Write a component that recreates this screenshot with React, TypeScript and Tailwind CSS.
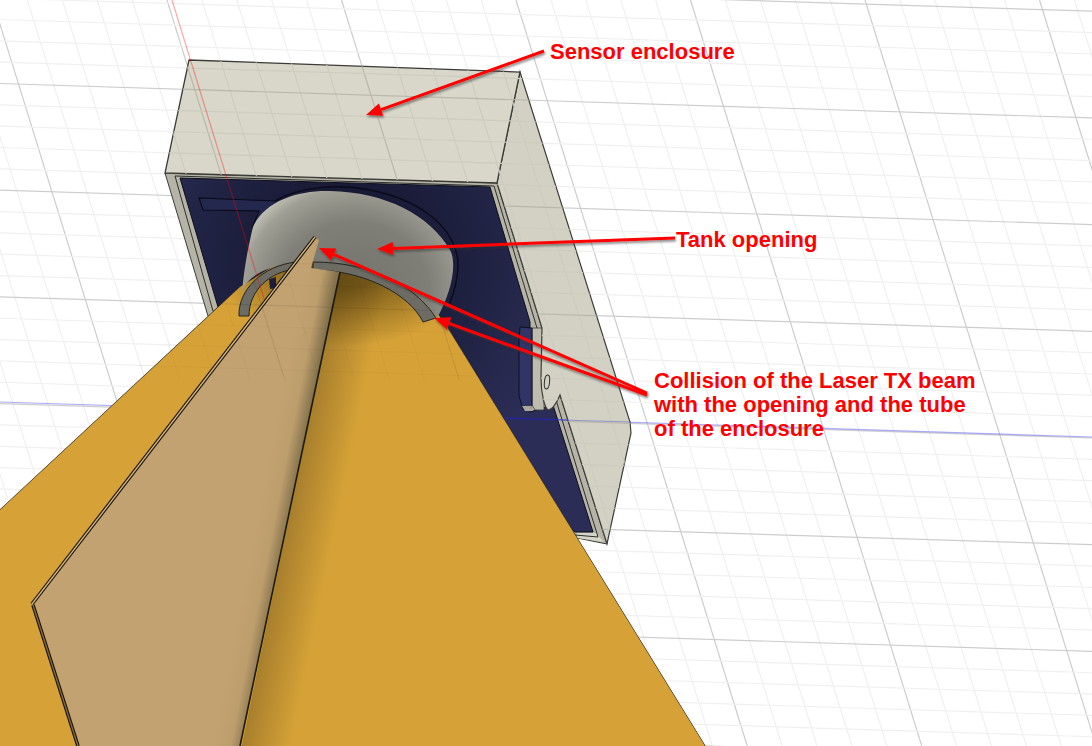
import React from 'react';

const verticals = Array.from({ length: 61 }, (_, i) => ({ x0: 865 + 34.9 * (i - 45), major: (i - 45) % 5 === 0 }));
const horizontals = Array.from({ length: 45 }, (_, i) => ({ y0: 83.5 + 21.34 * (i - 10), major: (i - 10) % 5 === 0 }));

function Grid({ major, minor, width = 1.2 }: { major: string; minor: string; width?: number }) {
  return (
    <g strokeWidth={width}>
      {verticals.map((l, i) => (
        <line key={'v' + i} x1={l.x0} y1={0} x2={l.x0 + 0.31 * 746} y2={746} stroke={l.major ? major : minor} />
      ))}
      {horizontals.map((l, i) => (
        <line key={'h' + i} x1={0} y1={l.y0} x2={1092} y2={l.y0 + 0.0315 * 1092} stroke={l.major ? major : minor} />
      ))}
    </g>
  );
}

// red callout arrow, head length/width in px
function Arrow({ from, to }: { from: [number, number]; to: [number, number] }) {
  const dx = to[0] - from[0];
  const dy = to[1] - from[1];
  const len = Math.hypot(dx, dy);
  const ux = dx / len;
  const uy = dy / len;
  const bx = to[0] - ux * 16;
  const by = to[1] - uy * 16;
  const head = `${to[0]},${to[1]} ${bx - uy * 6.5},${by + ux * 6.5} ${bx + uy * 6.5},${by - ux * 6.5}`;
  return (
    <g filter="url(#arrowShadow)">
      <line x1={from[0]} y1={from[1]} x2={bx} y2={by} stroke="#ff0000" strokeWidth={3} />
      <polygon points={head} fill="#ff0000" />
    </g>
  );
}

const topFace = '189,60 520,72 497,183 165,173';
const sideFace =
  'M520,72 L630,422 L631,433 L607,544 L560,395 C557,402 553,410 548,410 C545,408 541,395 541,378 L542,328 L497,183 Z';
const cylinder =
  'M242,292 C245,260 250,240 253,227 C265,200 300,190 330,191 C385,192 430,215 450,250 C458,265 450,295 437,318 C415,285 370,262 313,262 L295,263 C262,266 245,280 242,292 Z';
const orange = 'M0,510 L240,287 L300,250 L425,296 L447,327 L705,746 L0,746 Z';
const tan = 'M33,605 L316,238 L319,240 L311,268 L340,272 L240,746 L78,746 Z';

export default function App() {
  return (
    <div className="relative w-[1092px] h-[746px] overflow-hidden bg-white">
      <svg className="block w-[1092px] h-[746px]" viewBox="0 0 1092 746">
        <defs>
          <filter id="arrowShadow" x="-20%" y="-40%" width="140%" height="180%">
            <feDropShadow dx="1" dy="2" stdDeviation="1" floodColor="#333333" floodOpacity="0.55" />
          </filter>
          <radialGradient id="navyShade" gradientUnits="userSpaceOnUse" cx="345" cy="260" r="230">
            <stop offset="0.3" stopColor="#181a35" />
            <stop offset="1" stopColor="#2b2d56" />
          </radialGradient>
          <radialGradient
            id="cylShade"
            gradientUnits="userSpaceOnUse"
            cx="0"
            cy="0"
            r="1"
            gradientTransform="translate(355 290) scale(124 113)"
          >
            <stop offset="0" stopColor="#73726b" />
            <stop offset="0.6" stopColor="#7f7e77" />
            <stop offset="0.9" stopColor="#a09f95" />
            <stop offset="1" stopColor="#bdbcb0" />
          </radialGradient>
          <linearGradient id="tanShade" gradientUnits="userSpaceOnUse" x1="262" y1="494" x2="293" y2="500">
            <stop offset="0" stopColor="#c2a270" />
            <stop offset="0.55" stopColor="#bc9d6c" />
            <stop offset="1" stopColor="#84724c" />
          </linearGradient>
          <linearGradient id="orangeShade" gradientUnits="userSpaceOnUse" x1="253" y1="492" x2="340" y2="510">
            <stop offset="0.45" stopColor="#d6a237" />
            <stop offset="0.46" stopColor="#a87f2d" />
            <stop offset="1" stopColor="#d6a237" />
          </linearGradient>
          <radialGradient
            id="orangeDark"
            gradientUnits="userSpaceOnUse"
            cx="0"
            cy="0"
            r="1"
            gradientTransform="translate(345 262) scale(130 85)"
          >
            <stop offset="0.3" stopColor="#3a2a05" stopOpacity="0.6" />
            <stop offset="1" stopColor="#3a2a05" stopOpacity="0" />
          </radialGradient>
          <clipPath id="boxClip">
            <polygon points={topFace} />
            <path d={sideFace} />
          </clipPath>
          <clipPath id="sheetClip">
            <polygon points="120,380 240,287 300,250 425,296 447,327 480,380" />
          </clipPath>
        </defs>

        <Grid major="#cdcdcd" minor="#f0f0f0" />
        <line x1={0} y1={402} x2={1092} y2={437} stroke="#0000ff" strokeOpacity={0.33} strokeWidth={1.2} />

        {/* front rim and back plate */}
        <polygon
          points="165,173 497,183 542,328 541,378 560,395 607,544 577,538 208,316"
          fill="#b5b4a6"
          stroke="#3c3c38"
          strokeWidth={1}
        />
        <polygon points="577,533 596,533 604,542 577,538" fill="#d6d5c9" />
        <polygon
          points="175,176 494,186 537,328 536,400 556,400 598,537 575,535 213,311"
          fill="none"
          stroke="#2f2f2c"
          strokeWidth={1}
        />
        <polygon
          points="180,178 490,187 530,322 530,412 553,405 593,532 575,532 218,307"
          fill="url(#navyShade)"
          stroke="#0d0e1d"
          strokeWidth={1}
        />
        <line x1={503} y1={418} x2={596} y2={421} stroke="#2222d0" strokeOpacity={0.7} strokeWidth={1.2} />
        <path
          d="M275,201 L199,198 L203,210 L259,211 L252,228"
          fill="#25284e"
          stroke="#0a0b1a"
          strokeWidth={1.2}
        />
        <path
          d="M275,201 C300,186 340,184 370,190 C420,200 450,225 457,255 C460,270 455,290 449,305"
          fill="none"
          stroke="#0a0b1a"
          strokeWidth={1.5}
        />

        {/* tab on the right wall */}
        <polygon points="532,328 544,328 544,410 535,410 532,405" fill="#bdbcae" stroke="#3c3c38" strokeWidth={0.8} />
        <path
          d="M520,327 L532,328 L532,405 L530,411 L523,409 L519,396 L519,340 Z"
          fill="#303566"
          stroke="#101120"
          strokeWidth={1}
        />
        <polygon points="522,406 532,406 531,411 525,411" fill="#a9a89a" />

        {/* enclosure shell */}
        <path d={sideFace} fill="#d2d1c4" stroke="#3c3c38" strokeWidth={1.2} />
        <polygon points={topFace} fill="#d8d7ca" stroke="#3a3a36" strokeWidth={1.3} />
        <g clipPath="url(#boxClip)">
          <Grid major="#b8b7aa" minor="#cdccbf" />
        </g>
        <line x1={560} y1={420} x2={631} y2={422} stroke="#5555cc" strokeOpacity={0.5} strokeWidth={1.2} />
        <ellipse cx="547" cy="382" rx="2.6" ry="7" transform="rotate(6 547 382)" fill="#cfcec1" stroke="#2d2d2a" strokeWidth={1} />

        {/* beam sheet behind */}
        <path d={orange} fill="#d6a237" stroke="#2c2a20" strokeWidth={1.2} />
        <path d={orange} fill="url(#orangeShade)" />
        <path d={orange} fill="url(#orangeDark)" />
        <polygon points="269,279 276,277 276,288 270,289" fill="#1c1e3c" />

        {/* tank opening */}
        <path d={cylinder} fill="url(#cylShade)" />
        <path
          d="M239,316 C238,290 262,266 296,262 L295,269 C270,272 249,290 249,316 Z"
          fill="#6c6c65"
          stroke="#25251f"
          strokeWidth={1}
        />
        <path
          d="M313,262 C370,262 415,285 436,318 L423,322 C410,295 365,270 313,270 Z"
          fill="#6c6c65"
          stroke="#25251f"
          strokeWidth={1}
        />

        <line x1={172} y1={0} x2={265} y2={302} stroke="#ff0000" strokeOpacity={0.35} strokeWidth={1.2} />

        {/* side sheet */}
        <path d={tan} fill="url(#tanShade)" />
        <line x1={32} y1={604} x2={315} y2={237} stroke="#111" strokeWidth={3.6} />
        <line x1={32} y1={604} x2={315} y2={237} stroke="#d8b477" strokeWidth={1.4} />
        <line x1={33} y1={605} x2={78} y2={746} stroke="#111" strokeWidth={3.6} />
        <line x1={33} y1={605} x2={78} y2={746} stroke="#8a6b2d" strokeWidth={1.4} />
        <line x1={340} y1={272} x2={240} y2={746} stroke="#1b1a14" strokeWidth={1.6} />
        <g clipPath="url(#sheetClip)">
          <Grid major="#00000014" minor="#00000006" />
        </g>

        <Arrow from={[544, 51]} to={[366, 115]} />
        <Arrow from={[675, 238]} to={[377, 249]} />
        <Arrow from={[647, 393]} to={[319, 248]} />
        <Arrow from={[647, 395]} to={[434, 318]} />
      </svg>

      <div className="absolute left-[550px] top-[40px] font-['Liberation_Sans',sans-serif] font-bold text-[22px] leading-6 text-[#ff0000]">
        Sensor enclosure
      </div>
      <div className="absolute left-[676px] top-[228px] font-['Liberation_Sans',sans-serif] font-bold text-[22px] leading-6 text-[#ff0000]">
        Tank opening
      </div>
      <div className="absolute left-[654px] top-[369px] font-['Liberation_Sans',sans-serif] font-bold text-[22px] leading-6 text-[#ff0000] whitespace-nowrap">
        Collision of the Laser TX beam
        <br />
        with the opening and the tube
        <br />
        of the enclosure
      </div>
    </div>
  );
}
